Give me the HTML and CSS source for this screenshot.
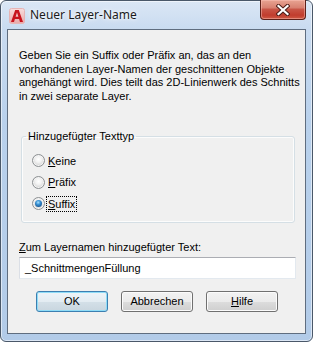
FILE: index.html
```html
<!DOCTYPE html>
<html lang="de">
<head>
    <meta charset="UTF-8">
    <title>Neuer Layer-Name</title>
    <link rel="stylesheet" href="styles.css">
</head>
<body>

<div class="window">
    <div class="titlebar">
        <svg class="app_icon" width="16" height="16" viewBox="0 0 16 16">
            <defs>
                <linearGradient id="icobg" x1="0" y1="0" x2="0" y2="1">
                    <stop offset="0" stop-color="#f8dcdc"/>
                    <stop offset="1" stop-color="#e9a9a9"/>
                </linearGradient>
            </defs>
            <rect x="0.5" y="0.5" width="15" height="15" rx="2" fill="url(#icobg)" stroke="#e6b4b4"/>
            <path d="M6.2 2 L9.8 2 L14 14 L11 14 L10.1 11 L5.9 11 L5 14 L2 14 Z M6.6 8.8 L9.4 8.8 L8 4.6 Z" fill="#c8141e" fill-rule="evenodd"/>
        </svg>
        <span class="title">Neuer Layer-Name</span>
        <div class="close_btn">
            <svg width="14" height="12" viewBox="0 0 14 12">
                <path d="M2.5 2 L11.5 10 M11.5 2 L2.5 10" stroke="#4b1c17" stroke-width="4.2" stroke-linecap="square"/>
                <path d="M2.5 2 L11.5 10 M11.5 2 L2.5 10" stroke="#ffffff" stroke-width="2.2" stroke-linecap="square"/>
            </svg>
        </div>
    </div>

    <div class="client">
        <p class="intro">Geben Sie ein Suffix oder Präfix an, das an den<br>vorhandenen Layer-Namen der geschnittenen Objekte<br>angehängt wird. Dies teilt das 2D-Linienwerk des Schnitts<br>in zwei separate Layer.</p>

        <fieldset class="group">
            <legend>Hinzugefügter Texttyp</legend>
            <div class="option"><span class="radio"></span><span class="opt_text"><u>K</u>eine</span></div>
            <div class="option"><span class="radio"></span><span class="opt_text"><u>P</u>räfix</span></div>
            <div class="option"><span class="radio checked"></span><span class="opt_text focus"><u>S</u>uffix</span></div>
        </fieldset>

        <div class="field_label"><u>Z</u>um Layernamen hinzugefügter Text:</div>
        <div class="textbox">_SchnittmengenFüllung</div>

        <div class="buttons">
            <div class="btn default">OK</div>
            <div class="btn">Abbrechen</div>
            <div class="btn"><u>H</u>ilfe</div>
        </div>
    </div>
</div>

</body>
</html>
```

FILE: styles.css
```css
body{
    margin: 0;
    background-color: #ffffff;
    font-family: "Liberation Sans", Arial, sans-serif;
    font-size: 11px;
    color: #000;
}

/* aero frame */
.window{
    width: 313px;
    height: 342px;
    box-sizing: border-box;
    display: flex;
    flex-direction: column;
    padding: 0 6px 7px 6px;
    border: 1px solid #4a5869;
    border-radius: 6px;
    background: linear-gradient(#dbe7f5, #c9dbf0 28px, #b9d1ec 120px, #b2cbe8);
    box-shadow: inset 0 0 0 1px rgba(255,255,255,0.55);
}

.titlebar{
    display: flex;
    align-items: flex-start;
    height: 28px;
}
.app_icon{
    margin: 7px 0 0 2px;
    flex: none;
}
.title{
    font-family: "Noto Sans", "Open Sans", sans-serif;
    font-size: 12px;
    line-height: 16px;
    color: #1b1b1b;
    margin: 6px 0 0 5px;
    text-shadow: 0 0 6px #ffffff, 0 0 3px #ffffff;
}
.close_btn{
    margin-left: auto;
    margin-top: -1px;
    width: 46px;
    height: 20px;
    box-sizing: border-box;
    border: 1px solid #5b2019;
    border-top: none;
    border-radius: 0 0 4px 4px;
    background: linear-gradient(#e8a493, #d88171 40%, #c85445 50%, #c13d2e 80%, #cf5a45);
    box-shadow: inset 0 0 0 1px rgba(255,200,190,0.45);
    display: flex;
    justify-content: center;
    align-items: center;
}

/* dialog area */
.client{
    flex: 1;
    border: 1px solid #5f6d7f;
    background-color: #f0f0f0;
}
.intro{
    margin: 19px 0 0 11px;
    line-height: 13.5px;
}

.group{
    margin: 27px 10px 0 13px;
    padding: 7px 0 7px 4px;
    border: 1px solid #d5dfe5;
    border-radius: 3px;
    box-shadow: inset 0 0 0 1px #fcfcfc;
}
.group legend{
    padding: 0 2px;
    line-height: 13px;
}
.option{
    display: flex;
    align-items: center;
    height: 21.5px;
    padding-left: 6px;
}
.radio{
    width: 13px;
    height: 13px;
    box-sizing: border-box;
    border-radius: 50%;
    border: 1px solid #8d9093;
    background: radial-gradient(circle at 50% 40%, #ffffff 0, #f2f2f2 35%, #d6d6d6 70%, #c8c8c8 100%);
    box-shadow: inset 0 0 0 1px #f4f4f4;
    margin-right: 1px;
    display: flex;
    justify-content: center;
    align-items: center;
}
.radio.checked::after{
    content: "";
    width: 7px;
    height: 7px;
    border-radius: 50%;
    background: radial-gradient(circle at 45% 35%, #a8e0ff 0, #3b93d4 35%, #1a5a98 75%, #0f3e73 100%);
}
.opt_text{
    line-height: 14px;
    padding: 0 1px;
    border: 1px dotted transparent;
}
.opt_text.focus{
    border-color: #000;
}

.field_label{
    margin: 18px 0 0 11px;
    line-height: 13px;
}
.textbox{
    margin: 3px 9px 0 11px;
    height: 22px;
    box-sizing: border-box;
    padding-left: 5px;
    line-height: 20px;
    background-color: #ffffff;
    border: 1px solid #e3e9ef;
    border-top-color: #abadb3;
    border-left-color: #dbdfe6;
}

.buttons{
    display: flex;
    gap: 13px;
    margin: 12px 0 0 28px;
}
.btn{
    width: 72px;
    height: 21px;
    box-sizing: border-box;
    border: 1px solid #707070;
    border-radius: 3px;
    background: linear-gradient(#f2f2f2, #ebebeb 50%, #dddddd 50%, #cfcfcf);
    box-shadow: inset 0 0 0 1px #fbfbfb;
    text-align: center;
    line-height: 19px;
}
.btn.default{
    border-color: #3c7fb1;
    background: linear-gradient(#eef4f8, #e3ecf2 50%, #d4e0e8 50%, #c9d6df);
    box-shadow: inset 0 0 0 1px #8fdcf7;
}
```
